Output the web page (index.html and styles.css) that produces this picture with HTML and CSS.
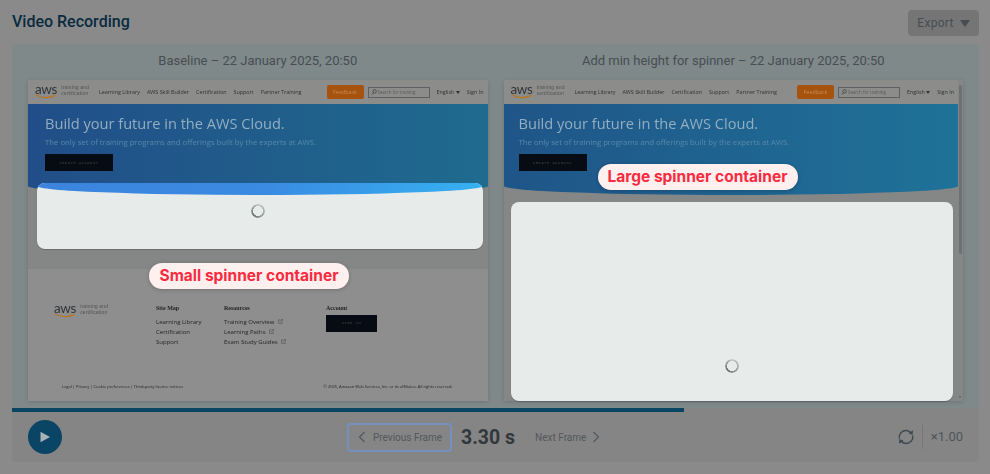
FILE: index.html
```html
<!DOCTYPE html>
<html lang="en">
<head>
    <meta charset="UTF-8">
    <meta name="viewport" content="width=device-width, initial-scale=1.0">
    <title>Video Recording</title>
    <link rel="stylesheet" href="styles.css">
</head>
<body>
    <!-- Header -->
    <div class="page-header">
        <div class="page-title">Video Recording</div>
        <button class="export-button">Export <span class="caret"></span></button>
    </div>

    <!-- Frames -->
    <div class="frames">
        <div class="frame">
            <div class="frame-title">Baseline – 22 January 2025, 20:50</div>
            <div class="shot">
                <div class="site">
                    <div class="site-nav">
                        <div class="aws-logo">
                            <div class="aws-mark">aws
                                <svg viewBox="0 0 20 4"><path d="M1 .5C6 3.6 13 3.8 18.500 1" fill="none" stroke="#b8751e" stroke-width="1.100"/></svg>
                            </div>
                            <div class="aws-tag">training and<br>certification</div>
                        </div>
                        <div class="nav-links">
                            <span>Learning Library</span><span>AWS Skill Builder</span><span>Certification</span><span>Support</span><span>Partner Training</span>
                        </div>
                        <div class="nav-feedback">Feedback</div>
                        <div class="nav-search">
                            <svg viewBox="0 0 8 8"><circle cx="4.800" cy="3.200" r="2.300" fill="none" stroke="#333" stroke-width=".9"/><path d="M3.200 5 1 7.300" stroke="#333" stroke-width=".9"/></svg>
                            Search for training
                        </div>
                        <div class="nav-lang">English <span class="mini-caret"></span></div>
                        <div class="nav-signin">Sign In</div>
                    </div>
                    <div class="hero">
                        <div class="hero-title">Build your future in the AWS Cloud.</div>
                        <div class="hero-text">The only set of training programs and offerings built by the experts at AWS.</div>
                        <div class="dark-button hero-button">CREATE ACCOUNT</div>
                    </div>
                    <div class="site-main"></div>
                    <div class="site-footer">
                        <div class="footer-top">
                            <div class="aws-logo footer-logo">
                                <div class="aws-mark">aws
                                    <svg viewBox="0 0 20 4"><path d="M1 .5C6 3.6 13 3.800 18.500 1" fill="none" stroke="#b8751e" stroke-width="1.100"/></svg>
                                </div>
                                <div class="aws-tag">training and<br>certification</div>
                            </div>
                            <div class="footer-col col-sitemap">
                                <div class="footer-head">Site Map</div>
                                <div>Learning Library</div>
                                <div>Certification</div>
                                <div>Support</div>
                            </div>
                            <div class="footer-col col-resources">
                                <div class="footer-head">Resources</div>
                                <div>Training Overview <svg class="ext" viewBox="0 0 6 6"><path d="M3 1H.7v4.300H5V3M2.500 3.500 5.300.7M3.800.5h1.700v1.700" fill="none" stroke="#444" stroke-width=".6"/></svg></div>
                                <div>Learning Paths <svg class="ext" viewBox="0 0 6 6"><path d="M3 1H.7v4.300H5V3M2.500 3.500 5.300.7M3.800.5h1.700v1.700" fill="none" stroke="#444" stroke-width=".6"/></svg></div>
                                <div>Exam Study Guides <svg class="ext" viewBox="0 0 6 6"><path d="M3 1H.7v4.300H5V3M2.500 3.500 5.300.7M3.800.5h1.700v1.700" fill="none" stroke="#444" stroke-width=".6"/></svg></div>
                            </div>
                            <div class="footer-col">
                                <div class="footer-head account-head">Account</div>
                                <div class="dark-button signin-button">SIGN IN</div>
                            </div>
                        </div>
                        <div class="footer-legal">
                            <span>Legal | Privacy | Cookie preferences | Third-party licence notices</span>
                            <span>© 2025, Amazon Web Services, Inc. or its affiliates. All rights reserved.</span>
                        </div>
                    </div>
                </div>
                <div class="spot spot-small">
                    <div class="spot-arc"></div>
                    <div class="spinner"></div>
                </div>
                <div class="callout callout-small">Small spinner container</div>
            </div>
        </div>

        <div class="frame">
            <div class="frame-title">Add min height for spinner – 22 January 2025, 20:50</div>
            <div class="shot shot-scroll">
                <div class="site">
                    <div class="site-nav">
                        <div class="aws-logo">
                            <div class="aws-mark">aws
                                <svg viewBox="0 0 20 4"><path d="M1 .5C6 3.600 13 3.800 18.500 1" fill="none" stroke="#b8751e" stroke-width="1.100"/></svg>
                            </div>
                            <div class="aws-tag">training and<br>certification</div>
                        </div>
                        <div class="nav-links">
                            <span>Learning Library</span><span>AWS Skill Builder</span><span>Certification</span><span>Support</span><span>Partner Training</span>
                        </div>
                        <div class="nav-feedback">Feedback</div>
                        <div class="nav-search">
                            <svg viewBox="0 0 8 8"><circle cx="4.800" cy="3.200" r="2.300" fill="none" stroke="#333" stroke-width=".9"/><path d="M3.200 5 1 7.300" stroke="#333" stroke-width=".9"/></svg>
                            Search for training
                        </div>
                        <div class="nav-lang">English <span class="mini-caret"></span></div>
                        <div class="nav-signin">Sign In</div>
                    </div>
                    <div class="hero">
                        <div class="hero-title">Build your future in the AWS Cloud.</div>
                        <div class="hero-text">The only set of training programs and offerings built by the experts at AWS.</div>
                        <div class="dark-button hero-button">CREATE ACCOUNT</div>
                    </div>
                    <div class="site-main"></div>
                </div>
                <div class="scrollbar">
                    <div class="scroll-thumb"></div>
                    <div class="scroll-arrow"></div>
                </div>
                <div class="spot spot-large">
                    <div class="spinner"></div>
                </div>
                <div class="callout callout-large">Large spinner container</div>
            </div>
        </div>
    </div>

    <!-- Progress -->
    <div class="progress"><div class="progress-fill"></div></div>

    <!-- Controls -->
    <div class="controls">
        <button class="play-button">
            <svg viewBox="0 0 12 12" width="12" height="12"><path d="M1.500 .8 11 6l-9.500 5.200z" fill="#a9b2b6"/></svg>
        </button>
        <div class="frame-nav">
            <button class="step-button step-prev">
                <svg viewBox="0 0 8 12" width="8" height="12"><path d="M6.500 1 1.500 6l5 5" fill="none" stroke="#53585d" stroke-width="1.200"/></svg>
                Previous Frame
            </button>
            <div class="time">3.30 s</div>
            <button class="step-button step-next">
                Next Frame
                <svg viewBox="0 0 8 12" width="8" height="12"><path d="M1.500 1 6.500 6l-5 5" fill="none" stroke="#53585d" stroke-width="1.200"/></svg>
            </button>
        </div>
        <div class="playback">
            <svg class="loop-icon" viewBox="0 0 18 18" width="18" height="18"><path d="M2.300 10.500C1.500 6 5 2.300 9.500 2.600c1.800.1 3.200.9 4.200 2.100M15.700 7.500c.8 4.500-2.700 8.200-7.200 7.900-1.800-.1-3.200-.9-4.200-2.100" fill="none" stroke="#3d4953" stroke-width="1.500"/><path d="M16 2.300 15.600 7l-4.200-1.700zM2 15.700 2.400 11l4.200 1.700z" fill="#3d4953"/></svg>
            <div class="speed">×1.00</div>
        </div>
    </div>
</body>
</html>
```

FILE: styles.css
```css
/* General Styles */
* {
    margin: 0;
    padding: 0;
    box-sizing: border-box;
}
body {
    font-family: Roboto, sans-serif;
    background: #8a8a8a;
    padding: 0 11px 12px 12px;
    height: 474px;
    overflow: hidden;
}
button {
    font-family: inherit;
    border: none;
    background: none;
}

/* Header */
.page-header {
    height: 44px;
    display: flex;
    justify-content: space-between;
    align-items: flex-start;
}
.page-title {
    margin-top: 12px;
    font-size: 16px;
    line-height: 20px;
    font-weight: 500;
    color: #092a3f;
}
.export-button {
    margin-top: 10px;
    width: 71px;
    height: 26px;
    background: #757575;
    border-radius: 4px;
    font-size: 12px;
    letter-spacing: .3px;
    color: #474c52;
    display: flex;
    align-items: center;
    justify-content: center;
    gap: 6px;
}
.caret {
    width: 0;
    height: 0;
    border-left: 5px solid transparent;
    border-right: 5px solid transparent;
    border-top: 7px solid #474c52;
}

/* Frames */
.frames {
    height: 364px;
    background: #7f898a;
    border-radius: 4px 4px 0 0;
    padding: 7px 16px 7px;
    display: grid;
    grid-template-columns: 1fr 1fr;
    gap: 16px;
}
.frame-title {
    height: 29px;
    line-height: 20px;
    text-align: center;
    font-size: 13px;
    color: #474d53;
}
.shot {
    position: relative;
    height: 321px;
    border-radius: 2px;
    box-shadow: 0 1px 4px rgba(0, 0, 0, 0.15);
}
.shot-scroll {
    padding-right: 5px;
    background: #858786;
}

/* Mini site in the recording */
.site {
    height: 100%;
    display: flex;
    flex-direction: column;
    background: #858786;
    font-family: "Open Sans", sans-serif;
    color: #333;
    overflow: hidden;
    filter: blur(.3px);
}
.site-nav {
    height: 24px;
    flex: none;
    background: #8c8c8b;
    display: flex;
    align-items: center;
    padding: 0 4px 0 7px;
    font-size: 5.400px;
    color: #2f3234;
}
.aws-logo {
    display: flex;
    align-items: flex-start;
    gap: 4px;
    width: 64px;
    flex: none;
}
.aws-mark {
    position: relative;
    font-family: Lato, sans-serif;
    font-size: 13.500px;
    line-height: 11px;
    letter-spacing: -.3px;
    color: #30343a;
    height: 16px;
}
.aws-mark svg {
    position: absolute;
    left: 0;
    top: 10px;
    width: 22px;
    height: 5px;
}
.aws-tag {
    font-family: "Liberation Sans", sans-serif;
    font-size: 5px;
    line-height: 5.800px;
    letter-spacing: .15px;
    color: #555;
    margin-top: 1px;
}
.nav-links {
    display: flex;
    gap: 7px;
    white-space: nowrap;
}
.nav-feedback {
    margin-left: auto;
    width: 37px;
    height: 14px;
    background: #a5530f;
    border-radius: 2px;
    color: #c98a57;
    text-align: center;
    line-height: 14px;
}
.nav-search {
    width: 62px;
    height: 11px;
    margin-left: 4px;
    border: 1px solid #5d6062;
    display: flex;
    align-items: center;
    gap: 1px;
    padding-left: 2px;
    font-size: 4.400px;
    color: #5a5a5a;
}
.nav-search svg {
    width: 6px;
    height: 6px;
}
.nav-lang {
    margin-left: 7px;
    white-space: nowrap;
}
.mini-caret {
    display: inline-block;
    vertical-align: middle;
    border-left: 2px solid transparent;
    border-right: 2px solid transparent;
    border-top: 3px solid #333;
}
.nav-signin {
    margin-left: 7px;
    white-space: nowrap;
}
.hero {
    height: 91px;
    flex: none;
    padding: 9px 17px 0;
    background: linear-gradient(90deg, #214e88, #1f6b8e);
    border-radius: 0 0 50% 50% / 0 0 9px 9px;
}
.shot-scroll .hero {
    padding-left: 15px;
    background: linear-gradient(90deg, #1f5588, #1f7299);
}
.hero-title {
    font-size: 14.600px;
    line-height: 20px;
    color: #93aec0;
    white-space: nowrap;
}
.hero-text {
    margin-top: 4px;
    font-size: 7.750px;
    line-height: 10px;
    color: #5888a8;
    white-space: nowrap;
}
.dark-button {
    background: #070b13;
    color: #444;
    font-family: "Liberation Mono", monospace;
    font-size: 3.800px;
    letter-spacing: .5px;
    display: flex;
    align-items: center;
    justify-content: center;
}
.hero-button {
    margin-top: 7px;
    width: 68px;
    height: 17px;
}
.site-main {
    flex: 1;
}
.site-footer {
    height: 132px;
    flex: none;
    background: #8e8e8e;
    padding-top: 34px;
    display: flex;
    flex-direction: column;
    font-size: 6px;
    line-height: 10.200px;
    color: #222426;
}
.footer-top {
    display: flex;
    padding-left: 26px;
}
.footer-logo {
    width: 102px;
    margin-top: 0;
}
.footer-col {
    flex: none;
}
.col-sitemap {
    width: 68px;
}
.col-resources {
    width: 102px;
}
.footer-head {
    font-family: "Liberation Serif", serif;
    font-weight: bold;
    font-size: 6px;
    line-height: 10px;
    margin-bottom: 4px;
    margin-top: 0;
}
.account-head {
    margin-bottom: 2px;
}
.signin-button {
    width: 51px;
    height: 17px;
}
.ext {
    width: 5px;
    height: 5px;
    margin-left: 2px;
}
.footer-legal {
    margin-top: auto;
    padding: 0 35px 11px 34px;
    display: flex;
    justify-content: space-between;
    font-size: 4px;
    line-height: 6px;
    color: #222;
}

/* Scrollbar of the right frame */
.scrollbar {
    position: absolute;
    top: 0;
    right: 0;
    width: 5px;
    height: 100%;
    background: #858786;
}
.scroll-thumb {
    width: 3px;
    height: 169px;
    margin: 5px 1px 0;
    background: #6e7172;
    border-radius: 2px;
}
.scroll-arrow {
    position: absolute;
    bottom: 3px;
    left: 1px;
    border-left: 1.500px solid transparent;
    border-right: 1.500px solid transparent;
    border-top: 2px solid #555;
}

/* Highlighted spinner boxes */
.spot {
    position: absolute;
    background: #e7ebea;
    border-radius: 8px;
    overflow: hidden;
    display: flex;
    flex-direction: column;
    align-items: center;
    justify-content: flex-end;
    box-shadow: 0 1px 1px rgba(0, 0, 0, 0.2);
}
.spot-small {
    left: 9px;
    top: 103px;
    width: 446px;
    height: 66px;
    padding-bottom: 31px;
    padding-right: 4px;
}
.spot-large {
    left: 7px;
    top: 122px;
    width: 442px;
    height: 199px;
    padding-bottom: 28px;
}
.spot-arc {
    position: absolute;
    top: 0;
    left: 0;
    width: 100%;
    height: 12px;
    background: linear-gradient(90deg, #3c84dd, #3a8ae2 50%, #36b1f1);
    border-radius: 0 0 50% 50% / 0 0 9px 9px;
}
.spinner {
    width: 14px;
    height: 14px;
    border-radius: 50%;
    background: conic-gradient(#c4c9c9, #9a9fa0 40%, #6d7273 62%, #8d9293 80%, #c4c9c9);
    -webkit-mask: radial-gradient(circle, transparent 4.800px, #000 5.200px);
    mask: radial-gradient(circle, transparent 4.800px, #000 5.200px);
}
.callout {
    position: absolute;
    width: 200px;
    height: 26px;
    line-height: 26px;
    border-radius: 13px;
    background: #fff0f0;
    box-shadow: 0 1px 4px rgba(0, 0, 0, 0.2);
    color: #fb2b3f;
    font-family: Inter, sans-serif;
    font-size: 15.500px;
    font-weight: 700;
    text-align: center;
    white-space: nowrap;
}
.callout-small {
    left: 121px;
    top: 183px;
}
.callout-large {
    left: 94px;
    top: 84px;
}

/* Progress */
.progress {
    height: 4px;
    background: #858585;
}
.progress-fill {
    width: 672px;
    height: 100%;
    background: #0a4463;
}

/* Controls */
.controls {
    height: 50px;
    background: #858585;
    border-radius: 0 0 4px 4px;
    padding: 0 16px;
    display: flex;
    align-items: center;
}
.play-button {
    width: 34px;
    height: 34px;
    border-radius: 50%;
    background: #0a4565;
    display: flex;
    align-items: center;
    justify-content: center;
}
.frame-nav {
    margin-left: 285px;
    display: flex;
    align-items: center;
    color: #53585d;
}
.step-button {
    display: flex;
    align-items: center;
    font-size: 10px;
    color: #53585d;
}
.step-prev {
    width: 105px;
    height: 29px;
    border: 2px solid #7590bd;
    border-radius: 4px;
    padding-left: 9px;
    gap: 7px;
}
.step-next {
    margin-left: 20px;
    gap: 6px;
}
.time {
    margin-left: 9px;
    font-size: 19.500px;
    font-weight: 700;
    color: #32373c;
}
.playback {
    margin-left: auto;
    display: flex;
    align-items: center;
}
.loop-icon {
    margin-right: 7px;
}
.speed {
    height: 24px;
    line-height: 24px;
    border-left: 1px solid #767676;
    padding-left: 8px;
    font-size: 13px;
    color: #4f555b;
}
```
